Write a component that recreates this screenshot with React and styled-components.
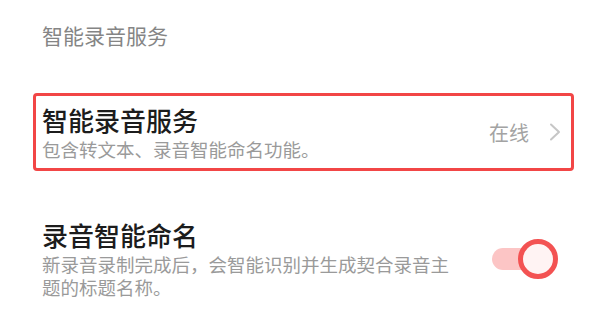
import React, { useState } from 'react';
import styled, { createGlobalStyle } from 'styled-components';

const GlobalStyle = createGlobalStyle`
  body {
    margin: 0;
    background: #ffffff;
    font-family: "Noto Sans CJK SC", "Noto Sans", sans-serif;
  }
`;

const Page = styled.div`
  width: 600px;
  height: 331px;
  overflow: hidden;
  background: #ffffff;
`;

const SectionHeader = styled.div`
  padding: 21px 0 0 42px;
  font-size: 21px;
  line-height: 28px;
  color: #858585;
`;

const Item = styled.div`
  display: flex;
  align-items: center;
  margin: ${(p) => (p.$highlight ? '44px 26px 0 33px' : '37px 30px 0 33px')};
  padding: 7px 9px 7px 6px;
  border: 3px solid ${(p) => (p.$highlight ? '#f24646' : 'transparent')};
  border-radius: 4px;
`;

const TextCol = styled.div`
  flex: 1;
  min-width: 0;
`;

const Title = styled.div`
  font-size: 26px;
  font-weight: 500;
  line-height: 34px;
  color: #1c1c1c;
`;

const Desc = styled.div`
  margin-top: 1px;
  max-width: 420px;
  font-size: 18.5px;
  line-height: 23px;
  color: #9a9a9a;
`;

const Status = styled.div`
  display: flex;
  align-items: center;
  gap: 20px;
  font-size: 20px;
  color: #a3a3a3;
`;

const Switch = styled.button`
  position: relative;
  flex: none;
  width: 66px;
  height: 40px;
  padding: 0;
  border: none;
  background: none;
  cursor: pointer;
`;

const Track = styled.span`
  position: absolute;
  left: 0;
  top: 9px;
  width: 54px;
  height: 22px;
  border-radius: 11px;
  background: ${(p) => (p.$on ? '#fcc5c5' : '#e0e0e0')};
`;

const Thumb = styled.span`
  position: absolute;
  top: 0;
  left: ${(p) => (p.$on ? '26px' : '0')};
  box-sizing: border-box;
  width: 40px;
  height: 40px;
  border-radius: 50%;
  border: 5px solid ${(p) => (p.$on ? '#f35252' : '#bdbdbd')};
  background: #fff3f3;
`;

const Chevron = () => (
  <svg width="13" height="20" viewBox="0 0 13 20">
    <path d="M2 2.5 L10 10 L2 17.5" fill="none" stroke="#c6c6c6" strokeWidth="2" strokeLinecap="round" strokeLinejoin="round" />
  </svg>
);

export default function App() {
  const [on, setOn] = useState(true);

  return (
    <Page>
      <GlobalStyle />
      <SectionHeader>智能录音服务</SectionHeader>
      <Item $highlight>
        <TextCol>
          <Title>智能录音服务</Title>
          <Desc>包含转文本、录音智能命名功能。</Desc>
        </TextCol>
        <Status>
          在线
          <Chevron />
        </Status>
      </Item>
      <Item>
        <TextCol>
          <Title>录音智能命名</Title>
          <Desc>新录音录制完成后，会智能识别并生成契合录音主题的标题名称。</Desc>
        </TextCol>
        <Switch onClick={() => setOn(!on)}>
          <Track $on={on} />
          <Thumb $on={on} />
        </Switch>
      </Item>
    </Page>
  );
}
